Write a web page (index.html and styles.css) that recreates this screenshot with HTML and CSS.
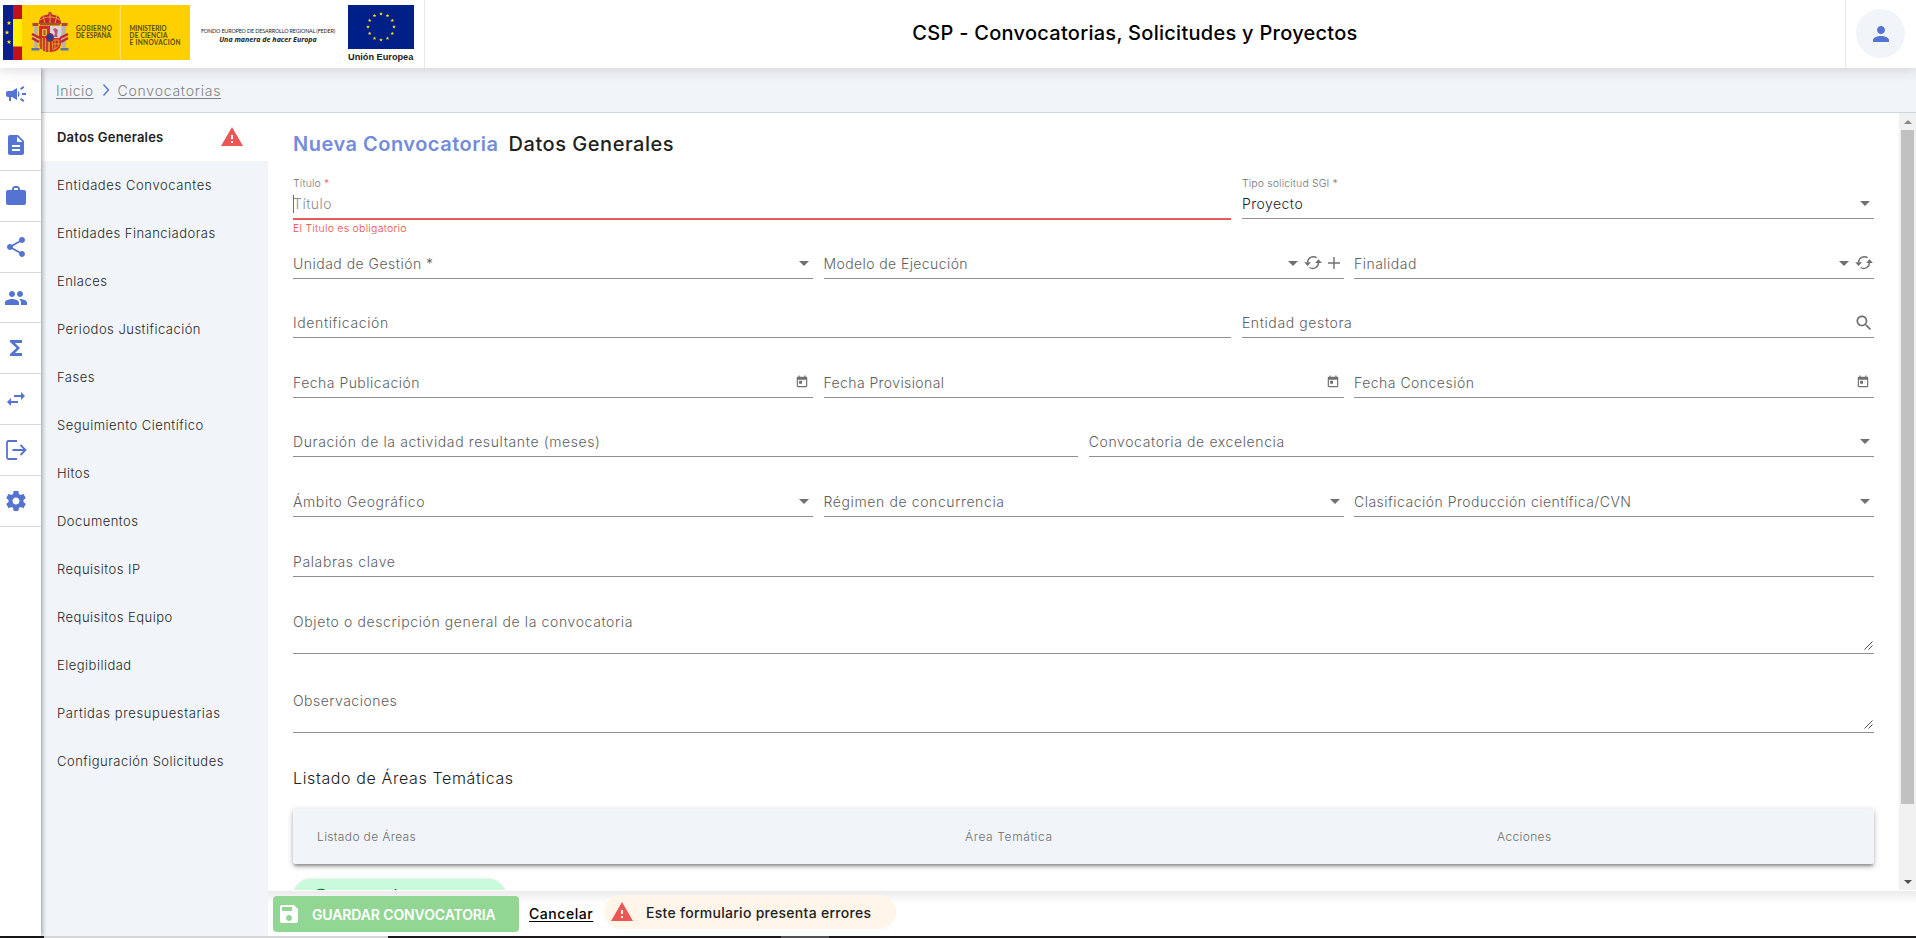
FILE: index.html
```html
<!DOCTYPE html>
<html lang="es">
<head>
<meta charset="utf-8">
<title>CSP - Convocatorias, Solicitudes y Proyectos</title>
<link rel="stylesheet" href="styles.css">
</head>
<body>
<svg width="0" height="0" class="defs">
  <symbol id="warn" viewBox="0 0 24 24"><path d="M1 21h22L12 2 1 21zm12-3h-2v-2h2v2zm0-4h-2v-4h2v4z"/></symbol>
  <symbol id="caret" viewBox="0 0 10 5"><path d="M0 0h10L5 5z"/></symbol>
  <symbol id="refresh" viewBox="0 0 20 20"><path d="M4.600 9.600A5.800 5.800 0 0 1 13.600 4.700M15.500 9.600a5.800 5.800 0 0 1-9 4.900" fill="none" stroke="currentColor" stroke-width="1.400"/><path d="M1.200 9.300h6.800L4.600 12.900zM12.100 9.900h6.800L15.500 6.300z"/></symbol>
  <symbol id="cal" viewBox="0 0 24 24"><path d="M19 3h-1V1h-2v2H8V1H6v2H5c-1.110 0-1.990.9-1.990 2L3 19c0 1.100.89 2 2 2h14c1.100 0 2-.9 2-2V5c0-1.100-.9-2-2-2zm0 16H5V8h14v11zM7 10h5v5H7z"/></symbol>
  <symbol id="grip" viewBox="0 0 9 9"><path d="M.5 8.500l8-8M4.500 8.500l4-4" fill="none" stroke="#555" stroke-width="1"/></symbol>
  <symbol id="star" viewBox="-5 -5 10 10"><path d="M0-5L1.200-1.600 4.800-1.500 1.900.6 2.900 4 0 2-2.900 4-1.900.6-4.800-1.500-1.200-1.600z"/></symbol>
</svg>

<header class="topbar">
  <div class="logos">
    <svg class="gov" width="187" height="56" viewBox="0 0 187 56">
      <rect width="187" height="55" fill="#ffd000"/>
      <rect width="10" height="55" fill="#0b1f8c"/>
      <rect x="10" width="9" height="55" fill="#c1121c"/>
      <rect x="10" y="14" width="9" height="27.500" fill="#ffee00"/>
      <rect x="116.800" width="1" height="55" fill="#ffe97a"/>
      <g fill="#ffe600"><use href="#star" x="3.500" y="15.500" width="5" height="5"/><use href="#star" x="1.500" y="25" width="5" height="5"/><use href="#star" x="3.500" y="34.500" width="5" height="5"/></g>
      <g>
        <path d="M36 19c0-5 2-8 5-8.500l4-1 1-2.500h2l1 2.500 4 1c3 .5 5 3.500 5 8.500z" fill="#c1272d"/>
        <path d="M37 15c3-2 6-3 10-3s7 1 10 3M40 11l2 7M47 8v10M54 11l-2 7" fill="none" stroke="#e8a33a" stroke-width="1"/>
        <path d="M37 18h20v2.500H37z" fill="#a8542c"/>
        <circle cx="47" cy="8" r="1.200" fill="#8a5a2a"/>
        <path d="M36 21h22v17c0 6-5 9-11 9s-11-3-11-9z" fill="#d52b2b"/>
        <path d="M47 21h11v12H47z" fill="#dcd3dc"/>
        <path d="M50 24l2-1 3 2-1 5 1 2h-4l1-4z" fill="#b4567a"/>
        <path d="M39 24h5v7h-5z" fill="#e8b13a"/><path d="M40.500 25h2v5h-2z" fill="#a3601f"/>
        <path d="M36 33h11v14c-6 0-11-3-11-9z" fill="#d8962c"/>
        <path d="M38 33v11M41 33v13M44 33v14" stroke="#c3272b" stroke-width="1.500"/>
        <path d="M49 35l7 0-1 7-5 3zM49 39h8M52 35v9" fill="none" stroke="#d89a2c"/>
        <ellipse cx="47" cy="32.500" rx="3.600" ry="4" fill="#27408b" stroke="#9b2531" stroke-width="1"/>
        <path d="M31 20h4v25h-4zM59 20h4v25h-4z" fill="#b9b3a8"/>
        <path d="M29.500 18h6v3h-6zM58.500 18h6v3h-6z" fill="#b5452f"/>
        <path d="M28.500 43h8v2.500h-8zM57.500 43h8v2.500h-8z" fill="#5b77a6"/>
        <path d="M29 29l8 4M29 33l7 4M65 29l-8 4M65 33l-7 4" stroke="#c1272d" stroke-width="2.400"/>
      </g>
      <g class="gov-text"><text x="73" y="25.500" textLength="36">GOBIERNO</text><text x="73" y="32.800" textLength="35">DE ESPAÑA</text>
      <text x="126.500" y="25.500" textLength="37">MINISTERIO</text><text x="126.500" y="32.800" textLength="38">DE CIENCIA</text><text x="126.500" y="39.800" textLength="51">E INNOVACIÓN</text></g>
    </svg>
    <div class="feder"><div class="feder-a">FONDO EUROPEO DE DESARROLLO REGIONAL (FEDER)</div><div class="feder-b">Una manera de hacer Europa</div></div>
    <div class="eu">
      <svg width="66" height="44" viewBox="0 0 66 44"><rect width="66" height="44" fill="#001f87"/>
        <g fill="#ffe600"><use href="#star" x="31" y="7" width="4" height="4"/><use href="#star" x="37.500" y="8.700" width="4" height="4"/><use href="#star" x="42.300" y="13.500" width="4" height="4"/><use href="#star" x="44" y="20" width="4" height="4"/><use href="#star" x="42.300" y="26.500" width="4" height="4"/><use href="#star" x="37.500" y="31.300" width="4" height="4"/><use href="#star" x="31" y="33" width="4" height="4"/><use href="#star" x="24.500" y="31.300" width="4" height="4"/><use href="#star" x="19.700" y="26.500" width="4" height="4"/><use href="#star" x="18" y="20" width="4" height="4"/><use href="#star" x="19.700" y="13.500" width="4" height="4"/><use href="#star" x="24.500" y="8.700" width="4" height="4"/></g></svg>
      <div class="eu-name">Unión Europea</div>
    </div>
  </div>
  <h1 class="app-title">CSP - Convocatorias, Solicitudes y Proyectos</h1>
  <div class="user"><div class="avatar"><svg width="24" height="24" viewBox="0 0 24 24"><path d="M12 12c2.210 0 4-1.790 4-4s-1.790-4-4-4-4 1.790-4 4 1.790 4 4 4zm0 2c-2.670 0-8 1.340-8 4v2h16v-2c0-2.660-5.330-4-8-4z"/></svg></div></div>
</header>

<div class="body">
  <nav class="rail">
    <a><svg viewBox="0 0 24 24"><path d="M18 11v2h4v-2h-4zm-2 6.610c.96.710 2.210 1.650 3.200 2.390.4-.53.8-1.070 1.200-1.600-.99-.74-2.240-1.680-3.200-2.400-.4.540-.8 1.080-1.200 1.610zM20.400 5.600c-.4-.53-.8-1.070-1.200-1.600-.99.740-2.240 1.680-3.200 2.400.4.530.8 1.070 1.200 1.600.96-.72 2.210-1.650 3.200-2.400zM4 9c-1.100 0-2 .9-2 2v2c0 1.100.9 2 2 2h1v4h2v-4h1l5 3V6L8 9H4zm11.500 3c0-1.330-.58-2.530-1.500-3.350v6.690c.92-.81 1.500-2.010 1.500-3.340z"/></svg></a>
    <a><svg viewBox="0 0 24 24"><path d="M14 2H6c-1.100 0-1.990.9-1.990 2L4 20c0 1.100.89 2 1.990 2H18c1.100 0 2-.9 2-2V8l-6-6zm2 16H8v-2h8v2zm0-4H8v-2h8v2zm-3-5V3.500L18.500 9H13z"/></svg></a>
    <a><svg viewBox="0 0 24 24"><path d="M20 6h-4V4l-2-2h-4L8 4v2H4c-1.110 0-2 .89-2 2v11c0 1.110.89 2 2 2h16c1.110 0 2-.89 2-2V8c0-1.110-.89-2-2-2zm-6 0h-4V4h4v2z"/></svg></a>
    <a><svg viewBox="0 0 24 24"><path d="M18 16.080c-.76 0-1.440.3-1.960.77L8.910 12.700c.05-.23.09-.46.09-.7s-.04-.47-.09-.7l7.050-4.110c.54.5 1.250.81 2.040.81 1.660 0 3-1.340 3-3s-1.340-3-3-3-3 1.340-3 3c0 .24.04.47.09.7L8.040 9.810C7.500 9.310 6.790 9 6 9c-1.660 0-3 1.340-3 3s1.340 3 3 3c.79 0 1.500-.31 2.040-.81l7.120 4.160c-.05.21-.08.43-.08.650 0 1.610 1.310 2.920 2.920 2.920s2.920-1.310 2.920-2.920-1.310-2.920-2.920-2.920z"/></svg></a>
    <a><svg viewBox="0 0 24 24"><path d="M16 11c1.660 0 2.990-1.340 2.990-3S17.660 5 16 5s-3 1.340-3 3 1.340 3 3 3zm-8 0c1.660 0 2.990-1.340 2.990-3S9.660 5 8 5 5 6.340 5 8s1.340 3 3 3zm0 2c-2.330 0-7 1.170-7 3.500V19h14v-2.500c0-2.330-4.670-3.500-7-3.500zm8 0c-.29 0-.62.02-.97.05 1.160.84 1.970 1.970 1.970 3.450V19h6v-2.500c0-2.330-4.670-3.500-7-3.500z"/></svg></a>
    <a><svg viewBox="0 0 24 24"><path d="M18 4H6v2l6.500 6L6 18v2h12v-3h-7l5-5-5-5h7z"/></svg></a>
    <a><svg viewBox="0 0 24 24"><path d="M6.990 11L3 15l3.990 4v-3H14v-2H6.990v-3zM21 9l-3.990-4v3H10v2h7.010v3L21 9z"/></svg></a>
    <a><svg viewBox="0 0 24 24"><path d="M13 3H4.500A1.500 1.500 0 0 0 3 4.500v15A1.500 1.500 0 0 0 4.500 21H13M8.500 12H21.500M16.500 7l5 5-5 5" fill="none" stroke="currentColor" stroke-width="1.800"/></svg></a>
    <a><svg viewBox="0 0 24 24"><path d="M19.430 12.980c.04-.32.07-.64.07-.98s-.03-.66-.07-.98l2.110-1.650c.19-.15.240-.42.120-.64l-2-3.460c-.12-.22-.39-.3-.61-.22l-2.490 1c-.52-.4-1.080-.73-1.690-.98l-.38-2.650C14.460 2.180 14.250 2 14 2h-4c-.25 0-.46.18-.49.420l-.38 2.650c-.61.250-1.170.59-1.690.98l-2.490-1c-.23-.09-.49 0-.61.220l-2 3.460c-.13.220-.07.490.12.640l2.110 1.650c-.04.32-.07.650-.07.980s.03.660.07.980l-2.110 1.650c-.19.150-.24.420-.12.640l2 3.460c.12.220.39.300.61.220l2.490-1c.52.400 1.080.730 1.690.980l.38 2.650c.03.240.24.420.49.420h4c.25 0 .46-.18.49-.42l.38-2.650c.61-.25 1.170-.59 1.690-.98l2.490 1c.23.090.49 0 .61-.22l2-3.460c.12-.22.07-.49-.12-.64l-2.110-1.650zM12 15.500c-1.930 0-3.500-1.570-3.500-3.500s1.570-3.500 3.500-3.500 3.500 1.570 3.500 3.500-1.570 3.500-3.500 3.500z"/></svg></a>
  </nav>
  <div class="page">
    <div class="crumbs"><a>Inicio</a><svg width="8" height="12" viewBox="0 0 8 12"><path d="M1.500.5L6.500 6l-5 5.500" fill="none" stroke="#5573d0" stroke-width="1.400"/></svg><a>Convocatorias</a></div>
    <div class="split">
      <aside class="side">
        <a class="active"><span>Datos Generales</span><svg class="red" width="24" height="24"><use href="#warn"/></svg></a>
        <a class="loose">Entidades Convocantes</a><a>Entidades Financiadoras</a><a>Enlaces</a><a>Periodos Justificación</a><a>Fases</a><a>Seguimiento Científico</a><a>Hitos</a><a>Documentos</a><a>Requisitos IP</a><a>Requisitos Equipo</a><a>Elegibilidad</a><a class="loose">Partidas presupuestarias</a><a>Configuración Solicitudes</a>
      </aside>
      <section class="content">
        <div class="scroll">
          <div class="form">
            <h2 class="heading"><span class="blue">Nueva Convocatoria</span><span>Datos Generales</span></h2>
            <div class="row wide first">
              <div class="field error"><span class="mini">Título <i>*</i></span><span class="placeholder">Título</span><span class="hint">El Título es obligatorio</span></div>
              <div class="field"><span class="mini">Tipo solicitud SGI *</span><span class="value">Proyecto</span><svg class="caret"><use href="#caret"/></svg></div>
            </div>
            <div class="row three">
              <div class="field"><span>Unidad de Gestión *</span><svg class="caret"><use href="#caret"/></svg></div>
              <div class="field tools"><span class="tight">Modelo de Ejecución</span><svg class="caret"><use href="#caret"/></svg><svg class="i20"><use href="#refresh"/></svg><svg class="plus" viewBox="0 0 14 14"><path d="M7 1v12M1 7h12" stroke="currentColor" stroke-width="1.400"/></svg></div>
              <div class="field tools"><span>Finalidad</span><svg class="caret"><use href="#caret"/></svg><svg class="i20"><use href="#refresh"/></svg></div>
            </div>
            <div class="row wide">
              <div class="field"><span class="loose">Identificación</span></div>
              <div class="field tools"><span class="loose">Entidad gestora</span><svg class="search" viewBox="0 0 24 24"><path d="M15.500 14h-.79l-.28-.27C15.410 12.590 16 11.110 16 9.500 16 5.910 13.090 3 9.500 3S3 5.910 3 9.500 5.910 16 9.500 16c1.610 0 3.090-.59 4.230-1.570l.27.280v.79l5 4.990L20.490 19l-4.990-5zm-6 0C7.010 14 5 11.990 5 9.500S7.010 5 9.500 5 14 7.010 14 9.500 11.990 14 9.500 14z"/></svg></div>
            </div>
            <div class="row three">
              <div class="field"><span>Fecha Publicación</span><svg class="cal"><use href="#cal"/></svg></div>
              <div class="field"><span class="tight">Fecha Provisional</span><svg class="cal"><use href="#cal"/></svg></div>
              <div class="field"><span>Fecha Concesión</span><svg class="cal"><use href="#cal"/></svg></div>
            </div>
            <div class="row two">
              <div class="field"><span class="loose">Duración de la actividad resultante (meses)</span></div>
              <div class="field"><span class="loose">Convocatoria de excelencia</span><svg class="caret"><use href="#caret"/></svg></div>
            </div>
            <div class="row three">
              <div class="field"><span class="loose">Ámbito Geográfico</span><svg class="caret"><use href="#caret"/></svg></div>
              <div class="field"><span class="loose">Régimen de concurrencia</span><svg class="caret"><use href="#caret"/></svg></div>
              <div class="field"><span>Clasificación Producción científica/CVN</span><svg class="caret"><use href="#caret"/></svg></div>
            </div>
            <div class="row one"><div class="field"><span class="loose">Palabras clave</span></div></div>
            <div class="row one area"><div class="field"><span class="loose">Objeto o descripción general de la convocatoria</span><svg class="grip"><use href="#grip"/></svg></div></div>
            <div class="row one area second"><div class="field"><span>Observaciones</span><svg class="grip"><use href="#grip"/></svg></div></div>
            <h3 class="subheading">Listado de Áreas Temáticas</h3>
            <div class="table-head"><span>Listado de Áreas</span><span class="loose">Área Temática</span><span>Acciones</span></div>
            <button class="add"><svg width="20" height="20" viewBox="0 0 24 24"><path d="M12 2a10 10 0 1 0 0 20 10 10 0 0 0 0-20zm5 11h-4v4h-2v-4H7v-2h4V7h2v4h4z"/></svg><span>Añadir Área Temática</span></button>
          </div>
          <div class="scrollbar"><svg width="8" height="4" viewBox="0 0 8 4"><path d="M0 4h8L4 0z" fill="#8a8a8a"/></svg><div class="thumb"></div><svg width="8" height="4" viewBox="0 0 8 4"><path d="M0 0h8L4 4z" fill="#505050"/></svg></div>
        </div>
        <footer class="actions">
          <button class="save"><svg width="24" height="24" viewBox="0 0 24 24"><path d="M17 3H5c-1.110 0-2 .9-2 2v14c0 1.100.89 2 2 2h14c1.100 0 2-.9 2-2V7l-4-4zm-5 16c-1.660 0-3-1.340-3-3s1.340-3 3-3 3 1.340 3 3-1.340 3-3 3zm3-10H5V5h10v4z"/></svg><span>GUARDAR CONVOCATORIA</span></button>
          <a class="cancel">Cancelar</a>
          <div class="alert"><svg class="red" width="24" height="24"><use href="#warn"/></svg><span>Este formulario presenta errores</span></div>
        </footer>
      </section>
    </div>
  </div>
</div>
<div class="strip"><i class="dark"></i><i class="light"></i><i class="dark mid"></i><i class="gray"></i><i class="dark rest"></i></div>
</body>
</html>
```
FILE: styles.css
```css
* { box-sizing: border-box; }
body { margin: 0; width: 1916px; height: 938px; overflow: hidden; display: flex; flex-direction: column; background: #fff; font-family: Inter, "Open Sans", sans-serif; font-size: 14px; font-weight: 300; color: #212121; }
h1, h2, h3 { margin: 0; font-weight: 400; }
button { border: 0; font: inherit; padding: 0; }
svg { display: block; fill: currentColor; flex: none; }
.defs { position: absolute; }

.topbar { height: 68px; flex: none; display: flex; align-items: center; position: relative; z-index: 5; background: #fff; box-shadow: 0 2px 12px rgba(60, 40, 60, .18); }
.logos { width: 425px; height: 68px; border-right: 1px solid #e8e8ec; display: flex; align-items: flex-start; padding: 5px 0 0 3px; }
.gov-text { font: 700 6.500px Lato, sans-serif; fill: #5a4a10; }
.feder { width: 136px; margin: 22px 0 0 10px; text-align: center; color: #222; white-space: nowrap; }
.feder-a { font: 400 5.400px/8px Lato, sans-serif; letter-spacing: -.13px; }
.feder-b { font: italic 700 7.100px/8px "Open Sans", sans-serif; }
.eu { margin-left: 12px; width: 66px; }
.eu-name { font: 700 9.200px/11px "Liberation Sans", sans-serif; margin-top: 3px; white-space: nowrap; color: #222; }
.app-title { flex: 1; text-align: center; font-size: 20px; font-weight: 500; color: #000; line-height: 30px; padding-bottom: 2px; letter-spacing: .27px; }
.user { width: 71px; height: 68px; border-left: 1px solid #e8e8ec; padding: 9px 0 0 10px; }
.avatar { width: 49px; height: 49px; border-radius: 50%; background: #f1f5f9; display: grid; place-items: center; color: #5573d0; }

.body { flex: 1; min-height: 0; display: flex; }
.rail { width: 41px; position: relative; z-index: 2; background: #fff; box-shadow: 1px 0 5px rgba(0, 0, 0, .4); color: #5573d0; flex: none; padding-top: 1px; }
.rail a { height: 50.900px; border-bottom: 1px solid #d8d8d8; display: flex; align-items: center; padding-left: 4px; }
.rail svg { width: 24px; height: 24px; }
.page { flex: 1; min-width: 0; display: flex; flex-direction: column; }
.crumbs { height: 45px; flex: none; background: #f1f5f9; border-bottom: 1px solid #d0d6da; display: flex; align-items: center; padding-left: 15px; color: #808080; }
.crumbs a { text-decoration: underline; text-underline-offset: 2px; letter-spacing: .76px; }
.crumbs a:first-child { letter-spacing: .5px; }
.crumbs svg { margin: 0 8px; }
.split { flex: 1; min-height: 0; display: flex; }
.side { width: 227px; background: #f1f5f9; flex: none; font-size: 13px; letter-spacing: .48px; }
.side a { height: 48px; display: flex; align-items: center; padding: 0 24px 0 16px; justify-content: space-between; color: #262626; }
.side a.loose { letter-spacing: .6px; }
.side .active { background: #fff; font-weight: 600; letter-spacing: .2px; color: #222; }
.red { color: #ec5656; }

.content { flex: 1; min-width: 0; display: flex; flex-direction: column; }
.scroll { height: 777px; flex: none; display: flex; overflow: hidden; }
.form { flex: 1; padding: 16px 25px 0 25px; }
.heading { height: 30px; line-height: 30px; font-size: 20px; font-weight: 500; display: flex; gap: 10px; letter-spacing: .53px; }
.blue { color: #748cdb; font-weight: 600; letter-spacing: .5px; }
.row { display: grid; height: 59.600px; align-items: end; column-gap: 10.500px; color: #5e5e5e; }
.first { height: 60px; }
.wide { grid-template-columns: calc(60% - 10.200px) 1fr; }
.two { grid-template-columns: 1fr 1fr; }
.three { grid-template-columns: 1fr 1fr 1fr; }
.field { height: 30px; border-bottom: 1px solid #8f8f8f; display: flex; align-items: center; padding: 0 4px 0 0; position: relative; letter-spacing: .48px; }
.field > span { flex: 1; white-space: nowrap; }
.loose { letter-spacing: .61px; }
.tight { letter-spacing: .4px; }
.field svg { color: #707070; }
.field .mini { position: absolute; left: 0; top: -13px; font-size: 10.500px; line-height: 16px; letter-spacing: .13px; color: #757575; }
.mini i { color: #ec5656; font-style: normal; }
.field .value { color: #222; }
.error { border-bottom: 2px solid #e85a5a; height: 31px; margin-bottom: -1px; }
.placeholder { color: #8e8e8e; position: relative; }
.placeholder::before { content: ""; position: absolute; left: 0; top: 0; width: 1px; height: 18px; background: #e03c3c; }
.field .hint { position: absolute; left: 0; top: 32px; font-size: 10.500px; line-height: 16px; letter-spacing: .26px; color: #ec4646; }
.caret { width: 10px; height: 5px; }
.tools { padding-right: 0; }
.tools .caret { margin-right: 5px; }
.i20 { width: 20px; height: 20px; }
.plus { width: 14px; height: 14px; margin: 0 3px 0 4px; }
.search { width: 20px; height: 20px; }
.cal { width: 14px; height: 14px; }
.area { height: 77.500px; }
.area .field { height: 46px; align-items: flex-start; padding: 5px 1px 0 0; }
.second { height: 79px; }
.grip { width: 9px; height: 9px; align-self: flex-end; margin-bottom: 3px; }
.subheading { font-size: 16px; font-weight: 300; line-height: 24px; margin-top: 33px; letter-spacing: .62px; }
.table-head { margin-top: 18.500px; height: 55px; background: #f1f5f9; display: grid; grid-template-columns: 648px 532px 1fr; padding-left: 24px; align-items: center; font-size: 12px; letter-spacing: .36px; color: #6e6e6e; box-shadow: 0 3px 3px -1px rgba(0, 0, 0, .3), 0 2px 6px rgba(0, 0, 0, .25); border-radius: 2px; }
.add { margin-top: 15.500px; width: 213px; height: 36px; border-radius: 18px; background: #c8fadc; display: flex; align-items: center; gap: 11px; padding: 0 0 0 18px; color: #0a8a20; box-shadow: 0 0 3px rgba(0, 0, 0, .15); }
.add span { color: #333; font-weight: 500; }
.scrollbar { width: 17px; background: #f1f1f1; display: flex; flex-direction: column; align-items: center; padding: 7px 0 6px; }
.thumb { width: 13px; height: 674px; margin: 6px 0 auto; background: #c1c1c1; }
.actions { flex: 1; margin-top: 1px; display: flex; align-items: flex-start; padding: 5px 0 0 5px; background: linear-gradient(#ebebeb, #fff 12px); }
.save { width: 246px; height: 36px; border-radius: 4px; background: #92d694; color: #fff; display: flex; align-items: center; gap: 11px; padding-left: 4px; font-weight: 600; letter-spacing: -.12px; }
.cancel { margin: 7px 11px 0 10px; width: 64px; line-height: 22px; font-weight: 500; color: #000; text-decoration: underline; text-underline-offset: 2px; letter-spacing: .55px; }
.alert { margin-top: -1px; width: 292px; height: 34px; border-radius: 17px; background: #fff5e8; display: flex; align-items: center; gap: 12px; padding-left: 6px; font-weight: 500; letter-spacing: .28px; }
.strip { display: flex; height: 2px; flex: none; }
.dark { width: 44px; background: #1b191a; }
.light { width: 344px; background: #d5d5d5; }
.mid { width: 393px; }
.gray { width: 48px; background: #505050; }
.rest { flex: 1; }
```
